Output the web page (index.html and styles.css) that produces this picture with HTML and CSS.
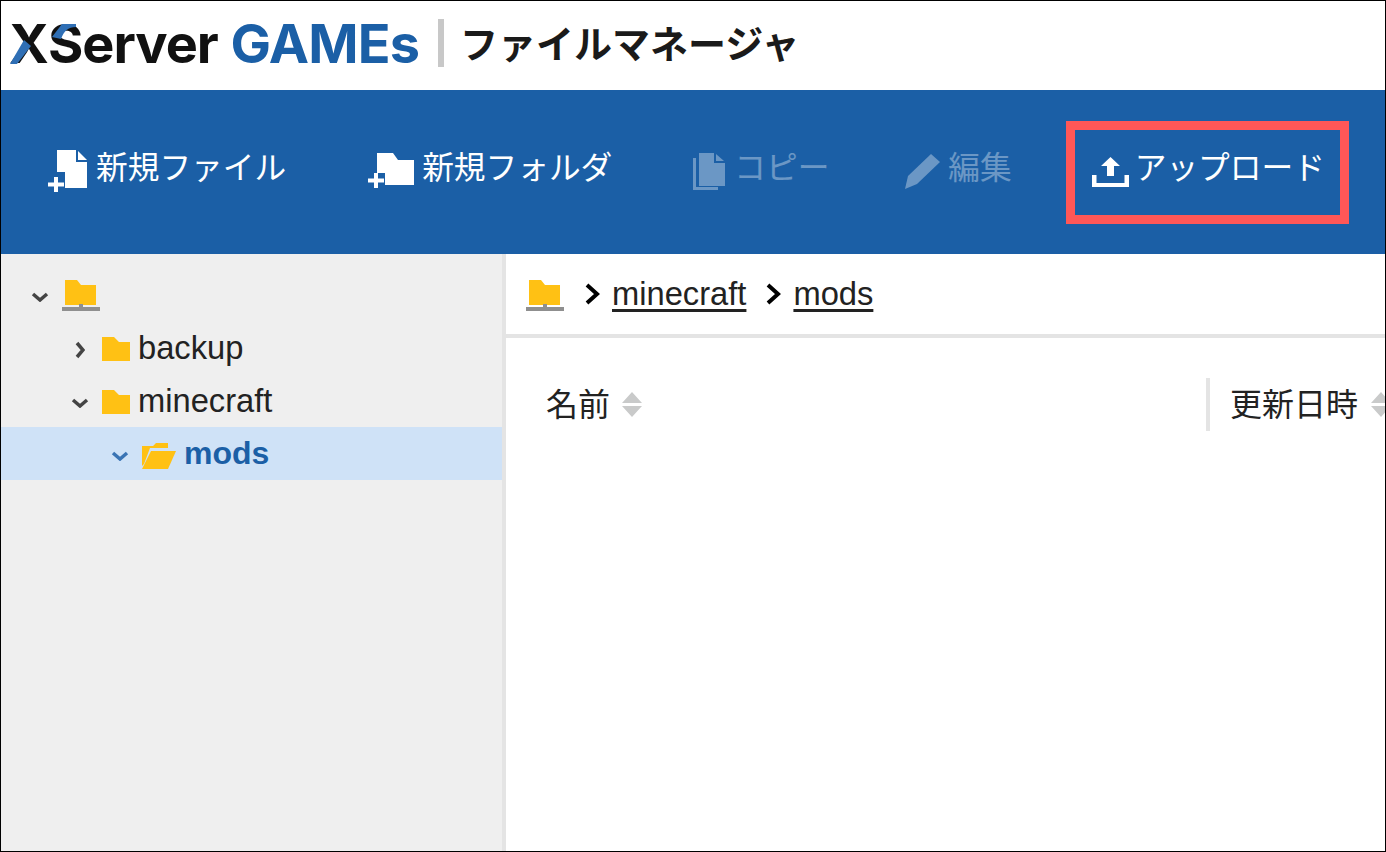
FILE: index.html
```html
<!DOCTYPE html>
<html lang="ja">
<head>
<meta charset="utf-8">
<title>ファイルマネージャ</title>
<link rel="stylesheet" href="styles.css">
</head>
<body>
<div class="frame">
  <header class="brand">
    <span class="logo"><span class="logo-x">X<svg class="logo-slash" viewBox="0 0 65 40"><path d="M0 40H7L21 22L14 16Z" fill="#2f6fb5"/><path d="M42 13L52 0H66V3C58 3 54 7 51 15Z" fill="#2f6fb5"/></svg></span>Server <span class="logo-blue">GAMEs</span></span>
    <span class="brand-sep"></span>
    <span class="brand-title">ファイルマネージャ</span>
  </header>
  <nav class="toolbar">
    <div class="tool tool-newfile">
      <svg class="ic ic-newfile" viewBox="0 0 39 42"><path d="M9 0H28V12H39V38H17V22H9Z" fill="#fff"/><path d="M30 1L39 10H30Z" fill="#fff"/><path d="M6 27h4v5.500h6v4h-6V42H6v-5.500H0v-4h6z" fill="#fff"/></svg>
      <span>新規ファイル</span>
    </div>
    <div class="tool tool-newfolder">
      <svg class="ic ic-newfolder" viewBox="0 0 46 35"><path d="M9 0H25L30 7H46V32H17V20H9Z" fill="#fff"/><path d="M6 20h4v5.500h6v4h-6V35H6v-5.500H0v-4h6z" fill="#fff"/></svg>
      <span>新規フォルダ</span>
    </div>
    <div class="tool tool-copy off">
      <svg class="ic ic-copy" viewBox="0 0 32 37"><path d="M6 0H21V10H32V33H6Z" fill="#fff"/><path d="M23 1L31 8H23Z" fill="#fff"/><path d="M0 5H3V34H25V37H0Z" fill="#fff"/></svg>
      <span>コピー</span>
    </div>
    <div class="tool tool-edit off">
      <svg class="ic ic-edit" viewBox="0 0 35 35"><path d="M26 0L35 8L12 30L0 35L3 22Z" fill="#fff"/></svg>
      <span>編集</span>
    </div>
    <div class="tool tool-upload">
      <svg class="ic ic-upload" viewBox="0 0 37 30"><path d="M18.500 0L28 9H22V19H15V9H9Z" fill="#fff"/><path d="M0 18H4.500V26H32.500V18H37V30H0Z" fill="#fff"/></svg>
      <span>アップロード</span>
    </div>
  </nav>
  <div class="main">
    <aside class="tree">
      <div class="row row-root">
        <svg class="chev chev-d" viewBox="0 0 18 10"><path d="M2 2L9 8L16 2" /></svg>
        <svg class="ic-root" viewBox="0 0 38 32"><path d="M3 0H15L19 5H34V25H3Z" fill="#ffc114"/><path d="M0 27H38V31H0Z" fill="#8f8f8f"/><path d="M17 24H21V27H23V31H15V27H17Z" fill="#8f8f8f"/></svg>
      </div>
      <div class="row row-l1">
        <svg class="chev chev-r" viewBox="0 0 10 18"><path d="M2 2L8 9L2 16" /></svg>
        <svg class="ic-folder" viewBox="0 0 28 24"><path d="M0 0H12L17 5H28V24H0Z" fill="#ffc114"/></svg>
        <span>backup</span>
      </div>
      <div class="row row-l1b">
        <svg class="chev chev-d" viewBox="0 0 18 10"><path d="M2 2L9 8L16 2" /></svg>
        <svg class="ic-folder" viewBox="0 0 28 24"><path d="M0 0H12L17 5H28V24H0Z" fill="#ffc114"/></svg>
        <span>minecraft</span>
      </div>
      <div class="row row-l2 selected">
        <svg class="chev chev-d chev-blue" viewBox="0 0 18 10"><path d="M2 2L9 8L16 2" /></svg>
        <svg class="ic-open" viewBox="0 0 34 26"><path d="M0 3H11L14 0H26V5H8L2 21L0 23Z" fill="#ffc114"/><path d="M9 8H34L26 26H0Z" fill="#ffc114"/></svg>
        <span>mods</span>
      </div>
    </aside>
    <section class="content">
      <div class="crumbs">
        <svg class="ic-root" viewBox="0 0 38 32"><path d="M3 0H15L19 5H34V25H3Z" fill="#ffc114"/><path d="M0 27H38V31H0Z" fill="#8f8f8f"/><path d="M17 24H21V27H23V31H15V27H17Z" fill="#8f8f8f"/></svg>
        <svg class="sep" viewBox="0 0 15 22"><path d="M2 2L12 11L2 20"/></svg>
        <a class="crumb">minecraft</a>
        <svg class="sep" viewBox="0 0 15 22"><path d="M2 2L12 11L2 20"/></svg>
        <a class="crumb">mods</a>
      </div>
      <div class="thead">
        <div class="th th-name"><span>名前</span><svg class="sort" viewBox="0 0 20 25"><path d="M10 0L20 11H0Z M0 14H20L10 25Z" fill="#c9caca"/></svg></div>
        <div class="th th-date"><span>更新日時</span><svg class="sort" viewBox="0 0 20 25"><path d="M10 0L20 11H0Z M0 14H20L10 25Z" fill="#c9caca"/></svg></div>
      </div>
    </section>
  </div>
</div>
</body>
</html>
```

FILE: styles.css
```css
* { box-sizing: border-box; }
html, body { margin: 0; padding: 0; }
body { font-family: "Liberation Sans", "Noto Sans CJK JP", sans-serif; font-size: 32.7px; color: #222; background: #fff; }
.frame { width: 1386px; height: 852px; border: 1px solid #000; display: flex; flex-direction: column; overflow: hidden; }

.brand { height: 89px; flex: none; display: flex; align-items: center; padding-left: 8px; background: #fff; }
.logo { font-family: Inter, "Liberation Sans", sans-serif; font-weight: 700; font-size: 54px; letter-spacing: -1px; color: #111; white-space: pre; line-height: 1; margin-top: -4px; }
.logo-x { position: relative; display: inline-block; }
.logo-slash { position: absolute; left: 1px; top: 7px; width: 65px; height: 40px; overflow: visible; }
.logo-blue { color: #1b5fa6; letter-spacing: -.8px; margin-left: 1px; }
.brand-sep { width: 6px; height: 48px; background: #c8c8c8; margin-left: 19px; margin-top: -6px; }
.brand-title { font-family: "Noto Sans CJK JP", sans-serif; font-weight: 700; font-size: 38px; color: #1a1a1a; margin-left: 16px; margin-top: -9px; }

.toolbar { height: 164px; flex: none; background: #1b5fa6; display: flex; align-items: center; padding-left: 47px; color: #fff; font-size: 31.7px; }
.tool { display: flex; align-items: center; white-space: nowrap; }
.tool span { position: relative; top: -7px; }
.off { opacity: .35; }
.ic { display: block; flex: none; }
.ic-newfile { width: 39px; height: 42px; margin-right: 9px; margin-top: -2px; }
.ic-newfolder { width: 46px; height: 35px; margin-right: 8px; margin-top: -3px; }
.ic-copy { width: 32px; height: 37px; margin-right: 9px; margin-top: -1px; }
.ic-edit { width: 35px; height: 35px; margin-right: 8px; margin-top: -1px; }
.ic-upload { width: 37px; height: 30px; margin-right: 6px; margin-top: 0; }
.tool-newfolder { margin-left: 82px; }
.tool-copy { margin-left: 81px; }
.tool-edit { margin-left: 76px; }
.tool-upload { margin-left: 54px; width: 283px; height: 103px; border: 9px solid #ff5757; padding-left: 17px; }

.main { flex: 1; display: flex; min-height: 0; }
.tree { width: 505px; flex: none; background: #efefef; border-right: 4px solid #e4e4e4; padding-top: 14px; }
.row { height: 53px; display: flex; align-items: center; white-space: nowrap; }
.row-root { padding-left: 30px; }
.row-l1 { padding-left: 74px; }
.row-l1b { padding-left: 70px; }
.row-l2 { padding-left: 110px; }
.selected { background: #cfe2f7; color: #1b5fa6; font-weight: 700; font-size: 32px; }
.chev { flex: none; fill: none; stroke: #444; stroke-width: 3.500; }
.chev-d { width: 18px; height: 10px; margin-top: 4px; }
.chev-r { width: 10px; height: 18px; margin-top: 5px; }
.chev-blue { stroke: #3a74b4; margin-top: 5px; }
.row-root .chev-d { margin-top: 5px; }
.row-root .ic-root { margin-left: 13px; margin-top: 2px; }
.ic-root { width: 38px; height: 32px; flex: none; }
.ic-folder { width: 28px; height: 24px; margin-right: 8px; margin-top: 2px; flex: none; }
.row-l1 .ic-folder { margin-left: 17px; }
.row-l1b .ic-folder { margin-left: 13px; }
.ic-open { width: 34px; height: 26px; margin-left: 13px; margin-right: 8px; margin-top: 5px; flex: none; }

.content { flex: 1; min-width: 0; overflow: hidden; }
.crumbs { height: 84px; border-bottom: 4px solid #e4e4e4; display: flex; align-items: center; padding-left: 20px; }
.crumbs .ic-root { margin-top: 4px; }
.crumb { color: #222; text-decoration: underline; text-decoration-thickness: 3px; text-underline-offset: 4px; }
.sep { width: 15px; height: 22px; margin: 0 12px 0 21px; fill: none; stroke: #000; stroke-width: 4; flex: none; }
.crumb + .sep { margin-left: 20px; margin-right: 12px; }
.thead { display: flex; align-items: center; margin-top: 40px; height: 53px; white-space: nowrap; font-size: 32px; }
.th { display: flex; align-items: center; }
.th span { position: relative; top: -3px; }
.th-name { width: 700px; padding-left: 40px; flex: none; }
.th-name .sort { margin-left: 12px; }
.th-date { height: 53px; border-left: 4px solid #e4e4e4; padding-left: 20px; flex: none; }
.sort { width: 20px; height: 25px; margin-left: 13px; flex: none; }
```
